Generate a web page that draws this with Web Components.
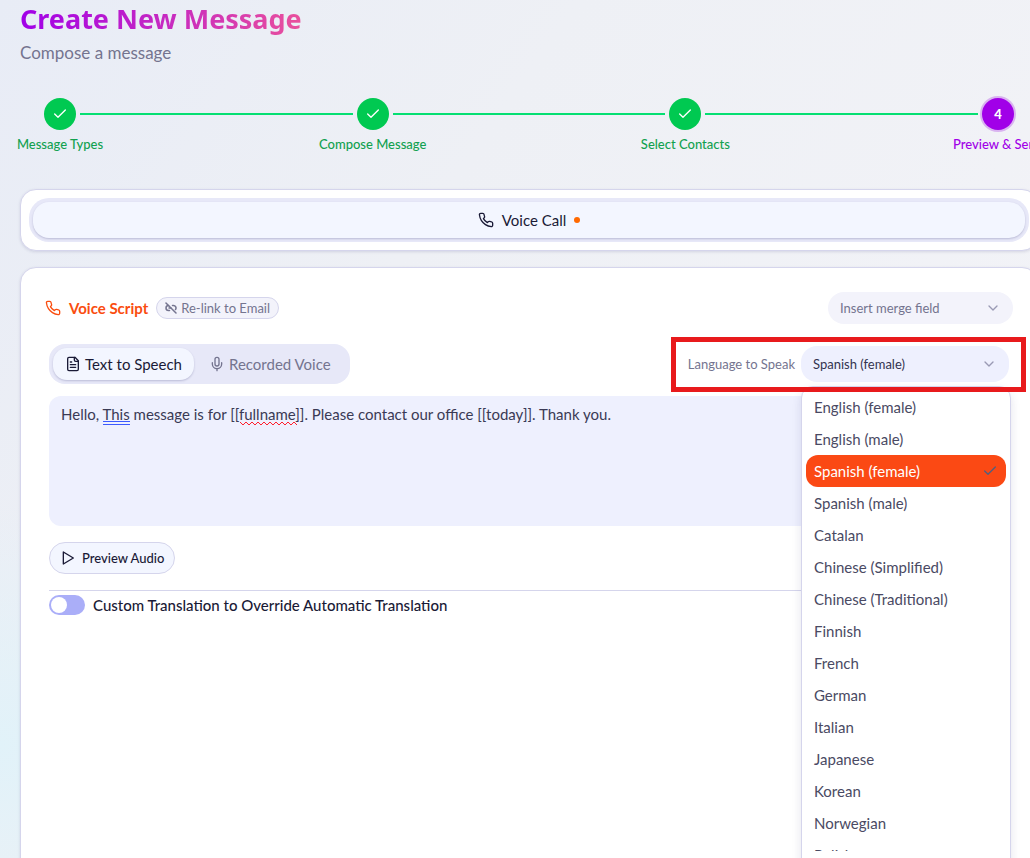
<!DOCTYPE html>
<html lang="en">
<head>
<meta charset="utf-8">
<meta name="viewport" content="width=device-width, initial-scale=1">
<title>Create New Message</title>
<style>
  body {
    --ink: #1a1a36;
    --muted: #74748f;
    --line: #d5d5ec;
    --pill: #f3f6ff;
    --track: #e7e8f8;
    --field: #eef0fe;
    --orange: #fa4d0f;
    --green: #00c951;
    --purple: #a100e8;
    --body-size: 15px;
    --small-size: 13px;
    margin: 0;
    min-height: 100vh;
    overflow: hidden;
    font-family: Lato, "Open Sans", sans-serif;
    font-size: var(--body-size);
    line-height: 20px;
    color: var(--ink);
    background:
      radial-gradient(circle at 0 83%, #e1f2f9 0, rgba(225, 242, 249, 0) 240px),
      linear-gradient(125deg, #e8ecf6 0%, #eef0f5 35%, #f4f4f8 100%);
  }
</style>
</head>
<body>
<message-composer></message-composer>

<script>
const ICONS = {
  phone: '<path d="M22 16.92v3a2 2 0 0 1-2.18 2 19.79 19.79 0 0 1-8.63-3.07 19.5 19.5 0 0 1-6-6 19.79 19.79 0 0 1-3.07-8.67A2 2 0 0 1 4.11 2h3a2 2 0 0 1 2 1.72 12.84 12.84 0 0 0 .7 2.81 2 2 0 0 1-.45 2.11L8.09 9.91a16 16 0 0 0 6 6l1.27-1.27a2 2 0 0 1 2.11-.45 12.84 12.84 0 0 0 2.81.7A2 2 0 0 1 22 16.92z"/>',
  unlink: '<path d="M9 17H7A5 5 0 0 1 7 7"/><path d="M15 7h2a5 5 0 0 1 4 8"/><path d="M8 12h4"/><path d="M2 2l20 20"/>',
  file: '<path d="M15 2H6a2 2 0 0 0-2 2v16a2 2 0 0 0 2 2h12a2 2 0 0 0 2-2V7z"/><path d="M14 2v4a2 2 0 0 0 2 2h4"/><path d="M10 9H8"/><path d="M16 13H8"/><path d="M16 17H8"/>',
  mic: '<path d="M12 2a3 3 0 0 0-3 3v7a3 3 0 0 0 6 0V5a3 3 0 0 0-3-3z"/><path d="M19 10v2a7 7 0 0 1-14 0v-2"/><path d="M12 19v3"/>',
  play: '<path d="M5 3l15 9-15 9z"/>',
  check: '<path d="M20 6L9 17l-5-5"/>',
  chevron: '<path d="M6 9l6 6 6-6"/>'
};

/** Stroke icon, sized by the --icon-size property */
class AppIcon extends HTMLElement {
  connectedCallback() {
    this.attachShadow({ mode: 'open' }).innerHTML = `
      <style>
        :host { display: inline-flex; flex: none; }
        svg {
          width: var(--icon-size, 16px);
          height: var(--icon-size, 16px);
          fill: none;
          stroke: currentColor;
          stroke-width: var(--icon-stroke, 2);
          stroke-linecap: round;
          stroke-linejoin: round;
        }
      </style>
      <svg viewBox="0 0 24 24" aria-hidden="true">${ICONS[this.getAttribute('name')]}</svg>
    `;
  }
}

class PageHeader extends HTMLElement {
  connectedCallback() {
    this.attachShadow({ mode: 'open' }).innerHTML = `
      <style>
        :host { display: block; }
        h1 {
          width: fit-content;
          margin: 0;
          font: 700 27px/38px "Noto Sans", "Open Sans", sans-serif;
          color: transparent;
          background: linear-gradient(90deg, #a100e8, #e9509c);
          -webkit-background-clip: text;
          background-clip: text;
        }
        p {
          margin: 2px 0 0;
          font-size: 17px;
          line-height: 26px;
          color: var(--muted);
        }
      </style>
      <h1><slot name="title"></slot></h1>
      <p><slot></slot></p>
    `;
  }
}

/** One step of the wizard: state is "done" or "current" */
class WizardStep extends HTMLElement {
  connectedCallback() {
    const done = this.getAttribute('state') === 'done';
    this.attachShadow({ mode: 'open' }).innerHTML = `
      <style>
        :host {
          display: flex;
          flex-direction: column;
          align-items: center;
          width: 32px;
          gap: 4px;
          color: #12a150;
          font-size: var(--small-size);
          font-weight: 500;
          white-space: nowrap;
        }
        :host([state="current"]) { color: var(--purple); }
        .dot {
          display: grid;
          place-items: center;
          width: 32px;
          height: 32px;
          border-radius: 50%;
          background: var(--green);
          color: #fff;
          font-weight: 900;
        }
        :host([state="current"]) .dot {
          background: var(--purple);
          box-shadow: 0 0 0 2px #d9b3f0;
        }
      </style>
      <span class="dot">${done ? '<app-icon name="check"></app-icon>' : this.getAttribute('number')}</span>
      <span><slot></slot></span>
    `;
  }
}

class WizardSteps extends HTMLElement {
  connectedCallback() {
    const steps = ['Message Types', 'Compose Message', 'Select Contacts', 'Preview &amp; Send'];
    const current = 3;
    this.attachShadow({ mode: 'open' }).innerHTML = `
      <style>
        :host { display: block; padding: 0 24px; }
        nav { display: flex; align-items: flex-start; }
        .line {
          flex: 1;
          height: 2px;
          margin: 15px 4px 0;
          background: #05df72;
        }
      </style>
      <nav aria-label="Progress">
        ${steps.map((label, i) => `
          <wizard-step number="${i + 1}" state="${i < current ? 'done' : 'current'}">${label}</wizard-step>
        `).join('<span class="line"></span>')}
      </nav>
    `;
  }
}

class SurfaceCard extends HTMLElement {
  connectedCallback() {
    this.attachShadow({ mode: 'open' }).innerHTML = `
      <style>
        :host {
          display: block;
          padding: var(--card-padding, 24px);
          border: 1px solid var(--line);
          border-radius: 16px;
          background: #fff;
          box-shadow: 0 1px 3px rgba(60, 60, 120, 0.16);
        }
      </style>
      <slot></slot>
    `;
  }
}

class ChannelTabs extends HTMLElement {
  connectedCallback() {
    this.attachShadow({ mode: 'open' }).innerHTML = `
      <style>
        :host {
          display: flex;
          padding: 4px;
          border-radius: 20px;
          background: var(--track);
        }
        button {
          flex: 1;
          display: flex;
          align-items: center;
          justify-content: center;
          gap: 8px;
          height: 36px;
          padding: 0 12px;
          border: 0;
          border-radius: 16px;
          background: var(--pill);
          box-shadow: 0 1px 2px rgba(60, 60, 120, 0.25);
          color: var(--ink);
          font: inherit;
        }
        .dot {
          width: 6px;
          height: 6px;
          border-radius: 50%;
          background: #ff6900;
        }
      </style>
      <button type="button" role="tab" aria-selected="true">
        <app-icon name="phone"></app-icon>Voice Call<span class="dot"></span>
      </button>
    `;
  }
}

/** Outlined button, small or regular */
class OutlineButton extends HTMLElement {
  connectedCallback() {
    this.attachShadow({ mode: 'open' }).innerHTML = `
      <style>
        :host { display: inline-flex; }
        button {
          display: flex;
          align-items: center;
          gap: 6px;
          height: 32px;
          padding: 0 10px;
          border: 1px solid var(--line);
          border-radius: 16px;
          background: var(--pill);
          color: var(--ink);
          font: inherit;
          font-size: var(--small-size);
          font-weight: 500;
        }
        :host([small]) { --icon-size: 12px; --icon-stroke: 3; }
        :host([small]) button {
          gap: 4px;
          height: 22px;
          padding: 0 8px;
          border-radius: 11px;
          background: #f3f3fb;
          color: var(--muted);
          font-weight: 400;
        }
      </style>
      <button type="button"><app-icon name="${this.getAttribute('icon')}"></app-icon><slot></slot></button>
    `;
  }
}

class PillSelect extends HTMLElement {
  connectedCallback() {
    const label = this.getAttribute('label');
    const hidden = this.hasAttribute('hide-label');
    this.attachShadow({ mode: 'open' }).innerHTML = `
      <style>
        :host {
          display: flex;
          align-items: center;
          gap: 6px;
          color: var(--muted);
          font-size: var(--small-size);
        }
        .box {
          display: grid;
          align-items: center;
          width: var(--select-width);
        }
        select, app-icon { grid-area: 1 / 1; }
        select {
          appearance: none;
          width: 100%;
          height: var(--select-height, 32px);
          padding: 0 36px 0 12px;
          border: 0;
          border-radius: 16px;
          background: var(--select-bg, #f3f3fb);
          color: var(--select-ink, var(--muted));
          font: inherit;
        }
        app-icon {
          justify-self: end;
          margin-right: 12px;
          color: #9a9ab4;
          pointer-events: none;
        }
      </style>
      ${hidden ? '' : `<label for="choice">${label}</label>`}
      <span class="box">
        <select id="choice" ${hidden ? `aria-label="${label}"` : ''}>
          <option>${this.getAttribute('value')}</option>
        </select>
        <app-icon name="chevron"></app-icon>
      </span>
    `;
  }
}

class OptionMenu extends HTMLElement {
  connectedCallback() {
    const options = [
      'English (female)', 'English (male)', 'Spanish (female)', 'Spanish (male)', 'Catalan',
      'Chinese (Simplified)', 'Chinese (Traditional)', 'Finnish', 'French', 'German',
      'Italian', 'Japanese', 'Korean', 'Norwegian', 'Polish'
    ];
    const value = this.getAttribute('value');
    this.attachShadow({ mode: 'open' }).innerHTML = `
      <style>
        :host {
          display: block;
          padding: 4px 4px 24px;
          border: 1px solid var(--line);
          border-radius: 12px;
          background: #fff;
          box-shadow: 0 4px 10px rgba(60, 60, 120, 0.14);
        }
        ul {
          max-height: 460px;
          margin: 0;
          padding: 0;
          overflow: hidden;
          list-style: none;
        }
        li {
          display: flex;
          align-items: center;
          justify-content: space-between;
          height: 32px;
          padding: 0 8px;
          border-radius: 12px;
          color: #4a4a63;
        }
        li[aria-selected="true"] { background: #fb4914; color: #fff; }
        app-icon { color: #50607f; }
      </style>
      <ul role="listbox" aria-label="Language to Speak">
        ${options.map(o => o === value
          ? `<li role="option" aria-selected="true">${o}<app-icon name="check"></app-icon></li>`
          : `<li role="option" aria-selected="false">${o}</li>`).join('')}
      </ul>
    `;
  }
}

/** Language drop-down with its open menu and the highlight frame round it */
class LanguagePicker extends HTMLElement {
  connectedCallback() {
    this.attachShadow({ mode: 'open' }).innerHTML = `
      <style>
        :host { display: block; position: relative; }
        pill-select {
          --select-width: 208px;
          --select-height: 36px;
          --select-bg: var(--field);
          --select-ink: #33334f;
        }
        option-menu {
          position: absolute;
          z-index: 2;
          top: calc(100% + 4px);
          right: -2px;
          width: 200px;
        }
        .frame {
          position: absolute;
          z-index: 3;
          inset: -9px -17px -10px;
          border: 5px solid #e81a1c;
          pointer-events: none;
        }
      </style>
      <pill-select label="Language to Speak" value="Spanish (female)"></pill-select>
      <option-menu value="Spanish (female)"></option-menu>
      <span class="frame"></span>
    `;
  }
}

class SourceToggle extends HTMLElement {
  connectedCallback() {
    this.attachShadow({ mode: 'open' }).innerHTML = `
      <style>
        :host {
          display: flex;
          padding: 4px;
          border-radius: 16px;
          background: var(--track);
        }
        button {
          display: flex;
          align-items: center;
          gap: 4px;
          height: 32px;
          padding: 0 12px;
          border: 0;
          border-radius: 14px;
          background: none;
          color: var(--muted);
          font: inherit;
        }
        button + button { padding: 0 15px; }
        button[aria-pressed="true"] {
          background: var(--pill);
          box-shadow: 0 1px 2px rgba(60, 60, 120, 0.25);
          color: var(--ink);
        }
      </style>
      <button type="button" aria-pressed="true"><app-icon name="file"></app-icon>Text to Speech</button>
      <button type="button" aria-pressed="false"><app-icon name="mic"></app-icon>Recorded Voice</button>
    `;
  }
}

/** Script text box; marks are underlines drawn below the checked words */
class ScriptEditor extends HTMLElement {
  connectedCallback() {
    this.attachShadow({ mode: 'open' }).innerHTML = `
      <style>
        :host { display: block; position: relative; }
        textarea {
          display: block;
          box-sizing: border-box;
          width: 100%;
          height: 130px;
          padding: 8px 12px;
          border: 0;
          border-radius: 12px;
          background: var(--field);
          color: #3a3a55;
          font: inherit;
          resize: none;
        }
        .mark {
          position: absolute;
          top: 25px;
          height: 4px;
          pointer-events: none;
        }
        .grammar {
          box-sizing: border-box;
          border: solid #3d5afe;
          border-width: 1px 0;
        }
        .spelling svg { display: block; }
      </style>
      <textarea aria-label="Voice script" spellcheck="false">Hello, This message is for [[fullname]]. Please contact our office [[today]]. Thank you.</textarea>
    `;
    this.mark('This', 'grammar');
    this.mark('fullname', 'spelling');
  }

  mark(word, kind) {
    const area = this.shadowRoot.querySelector('textarea');
    const style = getComputedStyle(area);
    const ctx = document.createElement('canvas').getContext('2d');
    ctx.font = `${style.fontSize} ${style.fontFamily}`;
    const before = area.value.slice(0, area.value.indexOf(word));
    const width = Math.round(ctx.measureText(word).width);
    const el = document.createElement('span');
    el.className = `mark ${kind}`;
    el.style.left = `${12 + Math.round(ctx.measureText(before).width)}px`;
    el.style.width = `${width}px`;
    if (kind === 'spelling') {
      let d = 'M0 1';
      for (let x = 3, y = 4; x <= width + 3; x += 3, y = 5 - y) d += `L${x} ${y}`;
      el.innerHTML = `<svg width="${width}" height="5" fill="none" stroke="#ff1f2d"><path d="${d}"/></svg>`;
    }
    this.shadowRoot.append(el);
  }
}

class ToggleSwitch extends HTMLElement {
  connectedCallback() {
    this.attachShadow({ mode: 'open' }).innerHTML = `
      <style>
        :host { display: flex; align-items: center; gap: 8px; font-weight: 500; }
        input {
          appearance: none;
          display: flex;
          align-items: center;
          width: 36px;
          height: 20px;
          margin: 0;
          padding: 2px;
          border-radius: 10px;
          background: #aaaef8;
        }
        input::before {
          content: "";
          width: 16px;
          height: 16px;
          border-radius: 50%;
          background: #fff;
        }
        input:checked { justify-content: flex-end; background: var(--orange); }
      </style>
      <input type="checkbox" role="switch" id="toggle">
      <label for="toggle">${this.getAttribute('label')}</label>
    `;
  }
}

class VoiceScript extends HTMLElement {
  connectedCallback() {
    this.attachShadow({ mode: 'open' }).innerHTML = `
      <style>
        :host { display: block; }
        .row {
          display: flex;
          align-items: center;
          justify-content: space-between;
        }
        .heading { display: flex; align-items: center; gap: 8px; }
        h2 {
          display: flex;
          align-items: center;
          gap: 8px;
          margin: 0;
          font-size: var(--body-size);
          font-weight: 700;
          color: var(--orange);
        }
        .merge { --select-width: 185px; }
        .body { padding: 20px 4px 0; }
        script-editor { margin: 12px 0 16px; }
        .translation {
          margin-top: 16px;
          padding-top: 4px;
          border-top: 1px solid var(--line);
        }
      </style>
      <div class="row">
        <div class="heading">
          <h2><app-icon name="phone"></app-icon>Voice Script</h2>
          <outline-button small icon="unlink">Re-link to Email</outline-button>
        </div>
        <pill-select class="merge" label="Merge field" hide-label value="Insert merge field"></pill-select>
      </div>
      <div class="body">
        <div class="row">
          <source-toggle></source-toggle>
          <language-picker></language-picker>
        </div>
        <script-editor></script-editor>
        <outline-button icon="play">Preview Audio</outline-button>
        <div class="translation">
          <toggle-switch label="Custom Translation to Override Automatic Translation"></toggle-switch>
        </div>
      </div>
    `;
  }
}

class MessageComposer extends HTMLElement {
  connectedCallback() {
    this.attachShadow({ mode: 'open' }).innerHTML = `
      <style>
        /* the page runs a little past the right and bottom edges of the window */
        :host {
          display: flex;
          flex-direction: column;
          min-height: calc(100vh + 40px);
          margin-right: -8px;
          padding-left: 20px;
        }
        wizard-steps { margin: 32px 0 35px; }
        .channels { --card-padding: 8px; }
        .script { flex: 1; margin-top: 16px; }
      </style>
      <page-header><span slot="title">Create New Message</span>Compose a message</page-header>
      <wizard-steps></wizard-steps>
      <surface-card class="channels"><channel-tabs></channel-tabs></surface-card>
      <surface-card class="script"><voice-script></voice-script></surface-card>
    `;
  }
}

customElements.define('app-icon', AppIcon);
customElements.define('page-header', PageHeader);
customElements.define('wizard-step', WizardStep);
customElements.define('wizard-steps', WizardSteps);
customElements.define('surface-card', SurfaceCard);
customElements.define('channel-tabs', ChannelTabs);
customElements.define('outline-button', OutlineButton);
customElements.define('pill-select', PillSelect);
customElements.define('option-menu', OptionMenu);
customElements.define('language-picker', LanguagePicker);
customElements.define('source-toggle', SourceToggle);
customElements.define('script-editor', ScriptEditor);
customElements.define('toggle-switch', ToggleSwitch);
customElements.define('voice-script', VoiceScript);
customElements.define('message-composer', MessageComposer);
</script>
</body>
</html>
